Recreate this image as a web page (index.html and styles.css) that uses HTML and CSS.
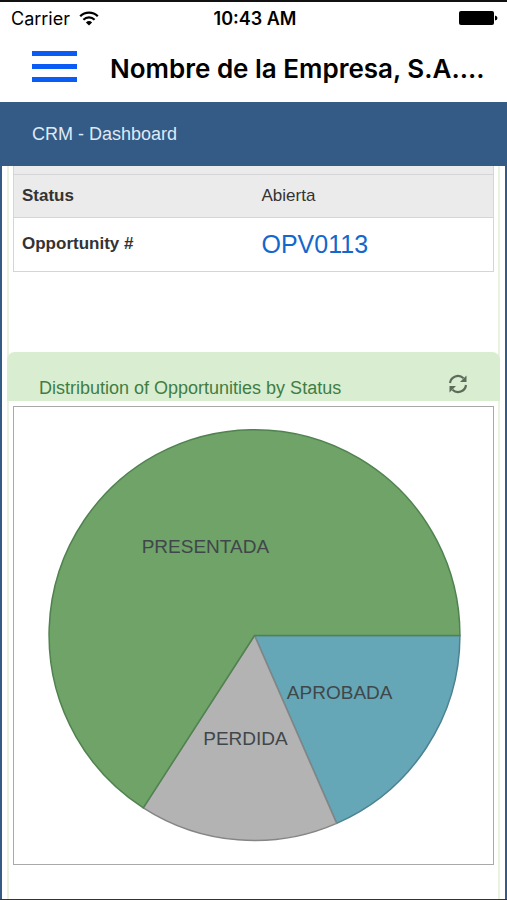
FILE: index.html
```html
<!DOCTYPE html>
<html lang="es">
<head>
<meta charset="utf-8">
<meta name="viewport" content="width=device-width, initial-scale=1">
<title>CRM - Dashboard</title>
<link rel="stylesheet" href="styles.css">
</head>
<body>
<div class="statusbar">
  <div class="carrier">
    <span>Carrier</span>
    <svg class="wifi" viewBox="0 0 20 15" aria-hidden="true">
      <path d="M1.2 5.2a12.6 12.6 0 0 1 17.6 0" fill="none" stroke="#000" stroke-width="2.3"/>
      <path d="M4.4 8.7a8 8 0 0 1 11.2 0" fill="none" stroke="#000" stroke-width="2.2"/>
      <path d="M10 14.6 6.9 11.4a4.5 4.5 0 0 1 6.2 0z"/>
    </svg>
  </div>
  <time class="clock">10:43 AM</time>
  <svg class="battery" viewBox="0 0 40 16" aria-hidden="true">
    <rect x="0" y="1" width="35" height="14" rx="2"/>
    <path d="M36 5.500q2.500.5 2.500 2.500t-2.500 2.500z"/>
  </svg>
</div>
<header class="navbar">
  <button class="menu" type="button" aria-label="Menu"><span class="bar"></span><span class="bar"></span><span class="bar"></span></button>
  <h1 class="company">Nombre de la Empresa, S.A....</h1>
</header>
<h2 class="page-title">CRM - Dashboard</h2>
<main class="content">
  <section class="panel details">
    <table class="record">
      <tbody>
        <tr class="shaded cut"><td colspan="2"></td></tr>
        <tr class="shaded"><th scope="row">Status</th><td>Abierta</td></tr>
        <tr class="tall"><th scope="row">Opportunity #</th><td><a href="#opportunity">OPV0113</a></td></tr>
      </tbody>
    </table>
  </section>
  <section class="panel chart-panel">
    <div class="panel-head">
      <h3>Distribution of Opportunities by Status</h3>
      <button class="refresh" type="button" aria-label="Refresh">
        <svg viewBox="0 0 20 20" aria-hidden="true">
          <g fill="none" stroke="#5d6b5b" stroke-width="2.200">
            <path d="M2 9A8 8 0 0 1 15.500 4.200"/>
            <path d="M18 11A8 8 0 0 1 4.500 15.800"/>
          </g>
          <g fill="#5d6b5b">
            <path d="M18.500 1.500V8H12z"/>
            <path d="M1.500 18.500V12H8z"/>
          </g>
        </svg>
      </button>
    </div>
    <div class="chart">
      <svg viewBox="0 1 478 457" role="img" aria-label="Distribution of Opportunities by Status">
        <g stroke-width="1.500" stroke-linejoin="round">
          <path d="M240 229H445A205 205 0 0 1 322 416.500Z" fill="#65a7b7" stroke="#4b8291"/>
          <path d="M240 229 322 416.500A205 205 0 0 1 129 401Z" fill="#b3b3b3" stroke="#858585"/>
          <path d="M240 229 129 401A205 205 0 1 1 445 229Z" fill="#6fa368" stroke="#508250"/>
        </g>
        <g class="slice-label">
          <text x="191" y="147">PRESENTADA</text>
          <text x="325" y="292">APROBADA</text>
          <text x="231" y="338">PERDIDA</text>
        </g>
      </svg>
    </div>
  </section>
</main>
</body>
</html>
```
FILE: styles.css
```css
* { box-sizing: border-box; }

body {
  margin: 0;
  min-height: 100vh;
  display: flex;
  flex-direction: column;
  border-top: 2px solid #111;
  border-bottom: 1px solid #333;
  background: #fff;
  font-family: "Liberation Sans", Arial, sans-serif;
  color: #333;
}

h1, h2, h3 { margin: 0; font-weight: 400; }

button { padding: 0; border: 0; background: none; }

.statusbar {
  display: grid;
  grid-template-columns: 1fr auto 1fr;
  align-items: center;
  height: 32px;
  padding: 0 8px 0 11px;
  color: #000;
  font-family: Inter, sans-serif;
  font-size: 18px;
}

.carrier { display: flex; align-items: center; gap: 9px; }

.wifi { width: 20px; height: 15px; }

.clock { font-weight: 600; }

.battery { width: 40px; height: 16px; justify-self: end; }

.navbar {
  display: flex;
  align-items: center;
  gap: 33px;
  height: 68px;
  padding: 0 20px 0 32px;
}

.menu {
  display: flex;
  flex-direction: column;
  gap: 8px;
  width: 45px;
  margin-bottom: 4px;
}

.bar { height: 5px; background: #0b5cf5; }

.company {
  flex: 1;
  overflow: hidden;
  color: #000;
  font-family: Inter, sans-serif;
  font-size: 26px;
  font-weight: 600;
  white-space: nowrap;
}

.page-title {
  padding: 0 32px;
  background: #345a86;
  color: #dfe9f5;
  font-size: 18px;
  line-height: 64px;
}

.content {
  flex: 1;
  display: flex;
  flex-direction: column;
  padding: 0 5px;
  border: solid #345a86;
  border-width: 0 2px;
}

.panel {
  padding: 0 4px;
  border: solid #eaf3df;
  border-width: 0 2px;
}

.details { padding-bottom: 80px; }

.record {
  width: 100%;
  border: 1px solid #d3d6d4;
  border-top: 0;
  border-collapse: collapse;
  table-layout: fixed;
  font-size: 17px;
}

.record th,
.record td {
  height: 43px;
  padding: 0 8px;
  border-bottom: 1px solid #d3d6d4;
  text-align: left;
}

.record .cut td { height: 8px; }

.record .tall th,
.record .tall td { height: 54px; }

.shaded { background: #ebebeb; }

.record a {
  color: #1467cc;
  font-size: 25px;
  text-decoration: none;
}

.chart-panel { flex: 1; }

.panel-head {
  display: flex;
  align-items: flex-end;
  justify-content: space-between;
  height: 49px;
  margin: 0 -6px 5px;
  padding: 0 32px 3px;
  border-radius: 8px 8px 0 0;
  background: #d9edd0;
}

.panel-head h3 {
  color: #3f7d45;
  font-size: 18px;
  line-height: 20px;
}

.refresh { height: 20px; margin-bottom: 4px; }

.refresh svg { display: block; width: 20px; height: 20px; }

.chart { border: 1px solid #a9a9a9; }

.chart svg { display: block; width: 100%; }

.slice-label {
  fill: #40474a;
  font-size: 19px;
  text-anchor: middle;
}
```
